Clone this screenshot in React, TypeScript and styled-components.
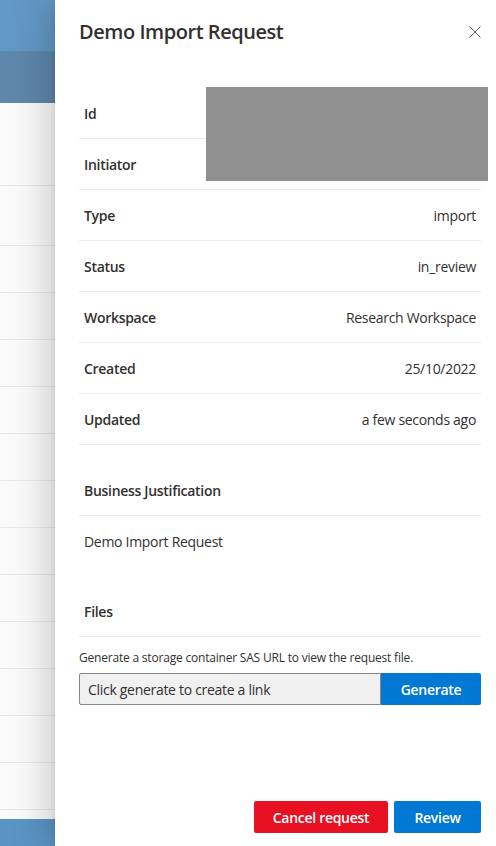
import React from "react";
import styled, { createGlobalStyle } from "styled-components";

const Global = createGlobalStyle`
  html, body { margin: 0; padding: 0; }
  body {
    font-family: "Segoe UI", "Open Sans", "Noto Sans", sans-serif;
    color: #323130;
    background: #fbfbfb;
    -webkit-font-smoothing: antialiased;
  }
  * { box-sizing: border-box; }
`;

const Page = styled.div`
  position: relative;
  width: 496px;
  height: 846px;
  overflow: hidden;
  display: flex;
  flex-direction: column;
`;

const TopBand = styled.div<{ $tone: string; $h: number }>`
  height: ${(p) => p.$h}px;
  flex: none;
  background: ${(p) => p.$tone};
`;

const BgRow = styled.div<{ $h: number }>`
  height: ${(p) => p.$h}px;
  flex: none;
  background: #fbfbfb;
  border-bottom: 1px solid #e9e9e9;
`;

const BgFill = styled.div`
  flex: 1;
  background: #fbfbfb;
`;

const Panel = styled.aside`
  position: absolute;
  top: 0;
  right: 0;
  bottom: 0;
  width: 441px;
  background: #ffffff;
  box-shadow: -10px 0 34px rgba(0, 0, 0, 0.18), -1px 0 4px rgba(0, 0, 0, 0.07);
  display: flex;
  flex-direction: column;
  padding: 0 15px 13px 24px;
`;

const Header = styled.header`
  height: 64px;
  display: flex;
  align-items: center;
  justify-content: space-between;
  flex: none;
`;

const Title = styled.h1`
  margin: 0;
  font-size: 20px;
  font-weight: 600;
  line-height: 28px;
  color: #323130;
  letter-spacing: -0.45px;
`;

const CloseButton = styled.button`
  width: 32px;
  height: 32px;
  margin-right: -10px;
  border: none;
  background: transparent;
  padding: 0;
  display: flex;
  align-items: center;
  justify-content: center;
  color: #605e5c;
  cursor: pointer;
`;

const Body = styled.div`
  position: relative;
  flex: 1;
  display: flex;
  flex-direction: column;
  padding-top: 24px;
  letter-spacing: -0.3px;
`;

const Row = styled.div`
  height: 51px;
  display: flex;
  align-items: center;
  justify-content: space-between;
  padding: 0 5px;
  border-bottom: 1px solid #edebe9;
  font-size: 14px;
`;

const Label = styled.span`
  font-weight: 600;
  color: #323130;
`;

const Value = styled.span`
  font-weight: 400;
  color: #323130;
`;

const SectionHead = styled(Row)`
  margin-top: 20px;
  height: 51px;
`;

const Paragraph = styled.div`
  height: 50px;
  display: flex;
  align-items: center;
  padding: 0 5px;
  font-size: 14px;
`;

const Hint = styled.p`
  margin: 13px 0 7px;
  font-size: 12px;
  line-height: 16px;
  color: #323130;
  letter-spacing: -0.2px;
`;

const LinkRow = styled.div`
  display: flex;
  height: 32px;
`;

const LinkField = styled.input`
  flex: 1;
  min-width: 0;
  height: 32px;
  border: 1px solid #8a8886;
  border-radius: 2px 0 0 2px;
  background: #f0f0f0;
  padding: 0 8px;
  font-family: inherit;
  font-size: 14px;
  letter-spacing: -0.3px;
  color: #323130;
  &::placeholder { color: #323130; }
`;

const Btn = styled.button<{ $variant: "primary" | "danger"; $w: number }>`
  width: ${(p) => p.$w}px;
  height: 32px;
  border: none;
  border-radius: 2px;
  background: ${(p) => (p.$variant === "danger" ? "#e81123" : "#0078d4")};
  color: #ffffff;
  font-family: inherit;
  font-size: 14px;
  font-weight: 600;
  letter-spacing: -0.3px;
  cursor: pointer;
  padding: 0 12px;
`;

const GenerateBtn = styled(Btn)`
  border-radius: 0 2px 2px 0;
`;

const Footer = styled.footer`
  display: flex;
  justify-content: flex-end;
  gap: 6px;
  flex: none;
`;

const Redaction = styled.div`
  position: absolute;
  left: 127px;
  top: 23px;
  width: 282px;
  height: 94px;
  background: #909090;
`;

const details: [string, string][] = [
  ["Id", ""],
  ["Initiator", ""],
  ["Type", "import"],
  ["Status", "in_review"],
  ["Workspace", "Research Workspace"],
  ["Created", "25/10/2022"],
  ["Updated", "a few seconds ago"],
];

const bgRows = [83, 60, 47, 47, 47, 47, 47, 47, 47, 47, 47, 47, 47, 47];

export default function App() {
  return (
    <>
      <Global />
      <Page>
        <TopBand $tone="#6399c7" $h={51} />
        <TopBand $tone="#5e87ab" $h={52} />
        {bgRows.map((h, i) => (
          <BgRow key={i} $h={h} />
        ))}
        <BgFill />
        <TopBand $tone="#5b94c4" $h={27} />

        <Panel>
          <Header>
            <Title>Demo Import Request</Title>
            <CloseButton aria-label="Close">
              <svg width="12" height="12" viewBox="0 0 12 12">
                <path d="M0.5 0.5 L11.5 11.5 M11.5 0.5 L0.5 11.5" stroke="#605e5c" strokeWidth="1" fill="none" />
              </svg>
            </CloseButton>
          </Header>
          <Body>
            {details.map(([k, v]) => (
              <Row key={k}>
                <Label>{k}</Label>
                <Value>{v}</Value>
              </Row>
            ))}
            <SectionHead>
              <Label>Business Justification</Label>
            </SectionHead>
            <Paragraph>Demo Import Request</Paragraph>
            <SectionHead>
              <Label>Files</Label>
            </SectionHead>
            <Hint>Generate a storage container SAS URL to view the request file.</Hint>
            <LinkRow>
              <LinkField readOnly placeholder="Click generate to create a link" />
              <GenerateBtn $variant="primary" $w={100}>Generate</GenerateBtn>
            </LinkRow>
            <Redaction />
          </Body>
          <Footer>
            <Btn $variant="danger" $w={134}>Cancel request</Btn>
            <Btn $variant="primary" $w={87}>Review</Btn>
          </Footer>
        </Panel>
      </Page>
    </>
  );
}
